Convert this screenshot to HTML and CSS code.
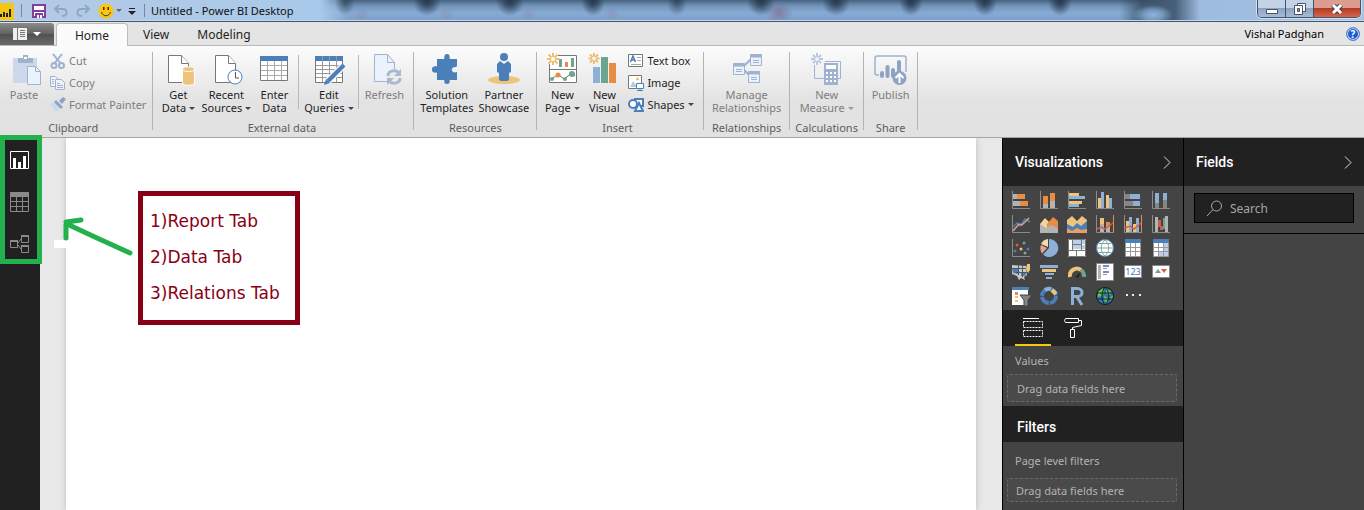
FILE: index.html
```html
<!DOCTYPE html>
<html lang="en">
<head>
<meta charset="utf-8">
<title>Untitled - Power BI Desktop</title>
<link rel="stylesheet" href="styles.css">
</head>
<body>
<header class="titlebar">
  <svg class="logo" width="14" height="20" viewBox="0 0 14 20"><path fill="#f2c811" d="M0 2h14v17H0z"/><path stroke="#222" stroke-width="2" d="M1 16v-3M4 16v-5M7 16v-4M10 16V8"/></svg>
  <span class="bar"></span>
  <button class="qa" aria-label="Save"><svg width="14" height="14" viewBox="0 0 14 14"><path fill="#fff" stroke="#7e3f9d" stroke-width="2" d="M1 1h12v12H1z"/><path fill="#7e3f9d" d="M1 6h12v2H1zM3 9h8v5H3z"/><path fill="#fff" d="M5 11h2v3H5zM8 11h2v3H8z"/></svg></button>
  <button class="qa" aria-label="Undo"><svg width="14" height="14" viewBox="0 0 14 14"><path fill="none" stroke="#8fa6c4" stroke-width="2" d="M5 1L1 5l4 4M1 5h8c5 0 5 7-1 7"/></svg></button>
  <button class="qa" aria-label="Redo"><svg width="14" height="14" viewBox="0 0 14 14"><path fill="none" stroke="#8fa6c4" stroke-width="2" d="M9 1l4 4-4 4M13 5H5c-5 0-5 7 1 7"/></svg></button>
  <button class="qa smile" aria-label="Send feedback"><svg width="16" height="16" viewBox="0 0 16 16"><circle cx="8" cy="8" r="7.500" fill="#fbc60c"/><path fill="#333" d="M5 4h1.500v3H5zM9.500 4H11v3H9.500z"/><path fill="none" stroke="#333" d="M3.500 9c1.500 5 7.500 5 9 0"/></svg><span class="caret dim"></span></button>
  <button class="qa" aria-label="Customize toolbar"><svg width="8" height="8" viewBox="0 0 8 8"><path fill="#222" d="M1 1h6v1H1zM0 4h8L4 8z"/></svg></button>
  <span class="bar last"></span>
  <h1 class="title">Untitled - Power BI Desktop</h1>
  <div class="winctl">
    <button aria-label="Minimize"><svg width="12" height="12" viewBox="0 0 12 12"><path fill="#fff" stroke="#4a5266" d="M.5 6.500h11v4H.5z"/></svg></button>
    <button aria-label="Restore"><svg width="12" height="12" viewBox="0 0 12 12"><path fill="#fff" stroke="#4a5266" d="M3.500.500h8v8h-8z"/><path fill="#fff" stroke="#4a5266" d="M.5 2.500h8v9h-8z"/><path fill="#7f94b4" stroke="#4a5266" d="M3.500 5.500h2v3h-2z"/></svg></button>
    <button class="close" aria-label="Close"><svg width="12" height="10" viewBox="0 0 12 10"><path stroke="#45404c" stroke-width="5" d="M2 1l8 8M10 1L2 9"/><path stroke="#fff" stroke-width="3" d="M2 1l8 8M10 1L2 9"/></svg></button>
  </div>
</header>

<nav class="tabs">
  <button class="file" aria-label="File"><svg width="14" height="12" viewBox="0 0 14 12"><path fill="#eee" d="M0 0h14v12H0z"/><path fill="#777" d="M4 0h1v12H4zM7 2h5v1H7zM7 4h5v1H7zM7 6h5v1H7zM7 8h5v1H7z"/></svg><span class="caret white"></span></button>
  <button class="tab active">Home</button>
  <button class="tab">View</button>
  <button class="tab">Modeling</button>
  <span class="user">Vishal Padghan</span>
  <button class="help" aria-label="Help">?</button>
</nav>

<section class="ribbon">
  <div class="group clip">
    <div class="items">
      <button class="big off w48"><svg width="32" height="32" viewBox="0 0 32 32"><path fill="#cdd9ea" d="M5 5h24v25H5z"/><path fill="#9fb2cf" d="M10 5h5V2h5v3h5v5H10z"/><path fill="#fff" d="M16 4h3v2h-3z"/><path fill="#eaf2fc" stroke="#9fb2cf" d="M19.500 13.500h8l5 5v13h-13z"/><path fill="none" stroke="#9fb2cf" d="M27.500 13.500v5h5"/></svg>Paste</button>
      <div class="list">
        <button class="small off"><svg width="16" height="16" viewBox="0 0 16 16"><g fill="none" stroke="#9fb2cf" stroke-width="2"><path d="M3 1l8 10M12 1L4 11"/><circle cx="4" cy="12.500" r="2.500"/><circle cx="11.500" cy="12.500" r="2.500"/></g></svg>Cut</button>
        <button class="small off"><svg width="16" height="16" viewBox="0 0 16 16"><g fill="#eef3fb" stroke="#9fb2cf"><path d="M.5 1.500h5l3 3v7h-8z"/><path d="M5.500 4.500h6l3 3v7h-9zM7 8.500h3M7 10.500h6M7 12.500h6M2 4.500h2M2 6.500h2M2 8.500h2"/></g></svg>Copy</button>
        <button class="small off"><svg width="16" height="16" viewBox="0 0 16 16"><path fill="#cdd9ea" d="M0 7l5-2 6 5-5 5z"/><path fill="#8da3c4" d="M4 5l2-2 7 7-2 2zM9 4l4-4 3 2-4 5z"/></svg>Format Painter</button>
      </div>
    </div>
    <div class="name">Clipboard</div>
  </div>

  <div class="group external">
    <div class="items">
      <button class="big w46"><svg width="32" height="32" viewBox="0 0 32 32"><path fill="#fff" stroke="#777" d="M6.500 2.500h13l7 8v19h-20z"/><path fill="#fff" stroke="#777" d="M19.500 2.500v8h7"/><path fill="#ecc47c" stroke="#fff" d="M20.500 16c0-3 12-3 12 0v14c0 3-12 3-12 0z"/><path fill="none" stroke="#fff" d="M21 17c1 2 10 2 11 0"/></svg>Get<br>Data<span class="caret"></span></button>
      <button class="big w50"><svg width="32" height="32" viewBox="0 0 32 32"><path fill="#fff" stroke="#777" d="M5.500 2.500h13l7 8v19h-20z"/><path fill="#fff" stroke="#777" d="M18.500 2.500v8h7"/><circle cx="25" cy="24" r="7" fill="#fff" stroke="#4a7fba"/><path fill="none" stroke="#555" d="M25.500 19v6H29"/></svg>Recent<br>Sources<span class="caret"></span></button>
      <button class="big w46"><svg width="32" height="32" viewBox="0 0 32 32"><path fill="#fff" stroke="#777" d="M2.500 3.500h27v24h-27z"/><path fill="#4a7fba" d="M2 3h28v5H2z"/><path stroke="#aaa" d="M9.500 8v19M16.500 8v19M23.500 8v19M3 12.500h26M3 17.500h26M3 22.500h26"/></svg>Enter<br>Data</button>
      <span class="rule"></span>
      <button class="big w57"><svg width="32" height="32" viewBox="0 0 32 32"><path fill="#fff" stroke="#777" d="M2.500 3.500h27v26h-27z"/><path fill="#4a7fba" d="M2 3h28v5H2z"/><path stroke="#999" d="M9.500 3v26M16.500 3v26M23.500 3v26M3 12.500h26M3 16.500h26M3 20.500h26M3 24.500h26"/><path stroke="#f4f4f4" stroke-width="7" d="M14 29L30 13"/><path stroke="#4a7fba" stroke-width="4" d="M15 28L31 12"/><path fill="#4a7fba" d="M11 32l2-6 4 4z"/></svg>Edit<br>Queries<span class="caret"></span></button>
      <span class="rule"></span>
      <button class="big off w48"><svg width="32" height="32" viewBox="0 0 32 32"><path fill="#eaf2fc" stroke="#9fb2cf" d="M6.500 1.500h13l7 8v19h-20z"/><path fill="none" stroke="#9fb2cf" d="M19.500 1.500v8h7"/><circle cx="26" cy="24" r="8" fill="#ececec"/><path fill="none" stroke="#a9b8cf" stroke-width="3" d="M20 23c0-6 9-7 11-2M32 25c0 6-9 7-11 2"/><path fill="#a9b8cf" d="M33 16v7h-7zM19 32v-7h7z"/></svg>Refresh</button>
    </div>
    <div class="name">External data</div>
  </div>

  <div class="group resources">
    <div class="items">
      <button class="big w57"><svg width="32" height="32" viewBox="0 0 32 32"><path fill="#4a7fba" d="M6 6h7c1 0-1-5 3-5s2 5 3 5h7v7c-1 2-4 0-5 3s3 4 5 3v8h-7c-1 0 1 4-3 4s-2-4-3-4H6v-7c-1-1-5 1-5-3.500S5 14 6 13z"/></svg>Solution<br>Templates</button>
      <button class="big w57"><svg width="32" height="32" viewBox="0 0 32 32"><ellipse cx="16" cy="27" rx="16" ry="4" fill="#ecc47c"/><circle cx="16" cy="4" r="4" fill="#4a7fba"/><path fill="#4a7fba" d="M12 8l4 3 4-3 3 3v8l-2 1v7l-2 1h-6l-2-1v-7l-2-1v-8z"/></svg>Partner<br>Showcase</button>
    </div>
    <div class="name">Resources</div>
  </div>

  <div class="group insert">
    <div class="items">
      <button class="big w42"><svg width="32" height="32" viewBox="0 0 32 32"><path fill="#fff" stroke="#777" d="M3.500 2.500h27v27h-27z"/><path stroke="#777" d="M4 16.500h27"/><path fill="#6ba58f" d="M13 6h3v8h-3zM25 5h3v9h-3z"/><path fill="#e78c43" d="M19 9h3v5h-3z"/><path fill="none" stroke="#666" d="M6 26l6-5 6 5 8-6 3 3"/><circle cx="6" cy="26" r="2" fill="#6ba58f"/><circle cx="12" cy="22" r="2.500" fill="#e78c43"/><circle cx="19" cy="26" r="2" fill="#6ba58f"/><circle cx="26" cy="21" r="3" fill="#6ba58f"/><circle cx="7" cy="6" r="6" fill="#fff"/><path fill="none" stroke="#ecbd72" stroke-width="2" d="M7 0v12M1 6h12M2.500 1.500l9 9M11.500 1.500l-9 9"/><circle cx="7" cy="6" r="2" fill="#fff"/></svg>New<br>Page<span class="caret"></span></button>
      <button class="big w42"><svg width="32" height="32" viewBox="0 0 32 32"><path fill="#8eafd6" d="M5 14h7v16H5z"/><path fill="#6ba58f" d="M13 4h7v26h-7z"/><path fill="#e78c43" d="M21 10h7v20h-7z"/><path stroke="#ecbd72" stroke-width="2" d="M6 0v11M.5 5.500h11M2 1.500l8 8M10 1.500l-8 8"/><circle cx="6" cy="5.500" r="2" fill="#f4f4f4"/></svg>New<br>Visual</button>
      <div class="list">
        <button class="small"><svg width="16" height="16" viewBox="0 0 16 16"><path fill="#fff" stroke="#777" d="M.5 1.500h14v12H.5z"/><path fill="none" stroke="#4a7fba" stroke-width="1.500" d="M2.500 9L5 3l2.500 6M3.500 7h3"/><path stroke="#aaa" d="M9 4.500h4M9 7.500h4M3 11.500h10"/></svg>Text box</button>
        <button class="small"><svg width="16" height="16" viewBox="0 0 16 16"><path fill="#fff" stroke="#777" d="M.5 .5h13v13H.5z"/><circle cx="9.500" cy="4" r="1.500" fill="#ecbd72"/><path fill="#b7c9df" d="M2 12l3-6 4 6z"/><path fill="#fff" stroke="#4a7fba" d="M8.500 8.500h7v5h-7zM12 14v2M9 15.500h6"/></svg>Image</button>
        <button class="small"><svg width="16" height="16" viewBox="0 0 16 16"><path fill="#fff" stroke="#4a7fba" stroke-width="2" d="M7 2h8v7H7z"/><circle cx="5" cy="7" r="4" fill="#fff" stroke="#4a7fba" stroke-width="2"/><path fill="#fff" stroke="#4a7fba" stroke-width="2" d="M11 6l4 8H7z"/></svg>Shapes<span class="caret"></span></button>
      </div>
    </div>
    <div class="name">Insert</div>
  </div>

  <div class="group">
    <div class="items">
      <button class="big off w78"><svg width="32" height="32" viewBox="0 0 32 32"><path stroke="#9fb2cf" stroke-width="2" d="M12 14l8-8M12 16l6 6"/><g fill="#eaf2fc" stroke="#9fb2cf"><path d="M2.500 10.500h11v11h-11zM19.500 1.500h11v11h-11zM17.500 18.500h11v11h-11z"/><path stroke-width="3" d="M2 12h12M19 3h12M17 20h12"/><path d="M5 16.500h6M5 18.500h6M22 7.500h6M22 9.500h6M20 24.500h6M20 26.500h6"/></g></svg>Manage<br>Relationships</button>
    </div>
    <div class="name">Relationships</div>
  </div>

  <div class="group">
    <div class="items">
      <button class="big off w66"><svg width="32" height="32" viewBox="0 0 32 32"><path fill="none" stroke="#9fb2cf" d="M3.500 12v13.500H13M14 8.500h15.500v17H27"/><path stroke="#b9c8de" stroke-width="2" d="M6 0v12M0 6h12M2 2l8 8M10 2l-8 8"/><circle cx="6" cy="6" r="2" fill="#f2f2f2"/><path fill="#9fb2cf" d="M13 10h14v22H13z"/><path fill="#fff" d="M15 12h10v4H15zM15 19h2v2h-2zM19 19h2v2h-2zM23 19h2v2h-2zM15 23h2v2h-2zM19 23h2v2h-2zM23 23h2v2h-2zM15 27h2v2h-2zM19 27h2v2h-2zM23 27h2v2h-2z"/></svg>New<br>Measure<span class="caret"></span></button>
    </div>
    <div class="name">Calculations</div>
  </div>

  <div class="group">
    <div class="items">
      <button class="big off w46"><svg width="32" height="32" viewBox="0 0 32 32"><path fill="none" stroke="#9fb2cf" stroke-width="1.500" d="M4 22H2c-1 0-2-1-2-2V5c0-1 1-2 2-2h27c1 0 2 1 2 2v14"/><path stroke="#8da3c4" stroke-width="4" stroke-linecap="round" d="M7 20v3M12.500 14v9M18 17v6M24 9v12"/><circle cx="24.500" cy="25" r="7" fill="#8da3c4"/><path fill="none" stroke="#fff" stroke-width="2" d="M24.500 30v-9M20.500 25l4-4 4 4"/></svg>Publish</button>
    </div>
    <div class="name">Share</div>
  </div>
</section>

<main class="work">
  <aside class="views">
    <button aria-label="Report"><svg width="20" height="20" viewBox="0 0 20 20"><path fill="none" stroke="#fff" d="M.5 1.500h18v17H.5z"/><path fill="#fff" d="M3 8h3v10H3zM8 12h3v6H8zM13 6h3v12h-3z"/></svg></button>
    <button aria-label="Data"><svg width="20" height="20" viewBox="0 0 20 20"><path fill="none" stroke="#8a8a8a" d="M.5.500h18v19H.5zM6.500 5v14M12.500 5v14M1 9.500h18M1 14.500h18"/><path fill="#8a8a8a" d="M0 0h19v5H0z"/></svg></button>
    <button aria-label="Relationships"><svg width="20" height="20" viewBox="0 0 20 20"><path fill="none" stroke="#8a8a8a" d="M.5 6.500h7v7h-7zM11.500 1.500h7v7h-7zM11.500 11.500h7v7h-7zM8 9l3-4M8 11l3 4"/><path fill="#8a8a8a" d="M0 6h8v2H0zM11 1h8v2h-8zM11 11h8v2h-8z"/></svg></button>
    <div class="mark"></div>
  </aside>
  <div class="stage">
    <div class="page"></div>
    <div class="patch"></div>
    <svg class="arrow" width="72" height="40" viewBox="0 0 72 40"><path fill="none" stroke="#22b14c" stroke-width="5" stroke-linecap="round" stroke-linejoin="round" d="M68 36L35 21 5 7M19 3L4 5M4 8v13"/></svg>
    <div class="note"><p>1)Report Tab</p><p>2)Data Tab</p><p>3)Relations Tab</p></div>
  </div>

  <section class="panel">
    <h2 class="head">Visualizations<button aria-label="Collapse visualizations"><svg width="8" height="13" viewBox="0 0 8 13"><path fill="none" stroke="#ddd" d="M1 .5l6 6-6 6"/></svg></button></h2>
    <div class="gallery">
      <button aria-label="Stacked bar chart"><svg viewBox="0 0 18 18"><path fill="#b3b3b3" d="M1 3h4v5H1zM1 10h7v5H1z"/><path fill="#e78c43" d="M5 3h8v5H5zM8 10h8v5H8z"/><path class="ax" d="M.5 0v17.500H18"/></svg></button>
      <button aria-label="Stacked column chart"><svg viewBox="0 0 18 18"><path fill="#b3b3b3" d="M3 13h5v4H3zM10 10h5v7h-5z"/><path fill="#e78c43" d="M3 5h5v8H3zM10 2h5v8h-5z"/><path class="ax" d="M.5 0v17.500H18"/></svg></button>
      <button aria-label="Clustered bar chart"><svg viewBox="0 0 18 18"><path fill="#ecc47c" d="M1 2h10v3H1zM1 10h13v3H1z"/><path fill="#8eafd6" d="M1 5h16v3H1zM1 13h10v3H1z"/><path class="ax" d="M.5 0v17.500H18"/></svg></button>
      <button aria-label="Clustered column chart"><svg viewBox="0 0 18 18"><path fill="#ecc47c" d="M2 7h3v10H2zM10 4h3v13h-3z"/><path fill="#8eafd6" d="M5 1h3v16H5zM13 7h3v10h-3z"/><path class="ax" d="M.5 0v17.500H18"/></svg></button>
      <button aria-label="100% stacked bar chart"><svg viewBox="0 0 18 18"><path fill="#858585" d="M1 3h5v5H1zM1 10h8v5H1z"/><path fill="#8eafd6" d="M6 3h10v5H6zM9 10h7v5H9z"/><path class="ax" d="M.5 0v17.500H18"/></svg></button>
      <button aria-label="100% stacked column chart"><svg viewBox="0 0 18 18"><path fill="#858585" d="M3 12h4v5H3zM11 9h4v8h-4z"/><path fill="#8eafd6" d="M3 2h4v10H3zM11 2h4v7h-4z"/><path class="ax" d="M.5 0v17.500H18"/></svg></button>

      <button aria-label="Line chart"><svg viewBox="0 0 18 18"><path fill="none" stroke="#4a7fba" stroke-width="1.500" d="M1 12l4-4 3 3 5-7 5 3"/><path fill="none" stroke="#dba08b" stroke-width="1.500" d="M1 16l6-7 3 1 7-7"/><path class="ax" d="M.5 0v17.500H18"/></svg></button>
      <button aria-label="Area chart"><svg viewBox="0 0 18 18"><path fill="#f0d49c" d="M0 9l5-6 5 5v6H0z"/><path fill="#e78c43" d="M7 9l6-7 5 4v7H7z"/><path fill="#b3b3b3" d="M0 9l6 4 5-3 7 3v5H0z"/></svg></button>
      <button aria-label="Stacked area chart"><svg viewBox="0 0 18 18"><path fill="#ecc47c" d="M-1 5l5-4 5 5 5-5 5 4v9H-1z"/><path fill="#eb9d63" d="M-1 12h20v6H-1z"/><path fill="#4a7fba" d="M-1 9l6 3 4-4 4 3 6-5v8l-6 1-4-2-5 3-5-3z"/></svg></button>
      <button aria-label="Line and stacked column chart"><svg viewBox="0 0 18 18"><path fill="#b3b3b3" d="M4 9h4v8H4zM10 7h4v10h-4z"/><path fill="#ecc47c" d="M4 3h4v6H4z"/><path fill="#e78c43" d="M10 7h4v4h-4zM17 0h1v18h-1z"/><path fill="none" stroke="#d35c48" stroke-width="1.500" d="M1 14l4-2 4 2 4-3 4-3"/><path class="ax" d="M.5 0v17.500H18"/></svg></button>
      <button aria-label="Line and clustered column chart"><svg viewBox="0 0 18 18"><path fill="#ecc47c" d="M2 6h3v11H2zM9 9h3v8H9z"/><path fill="#8eafd6" d="M5 2h3v15H5zM12 3h3v14h-3z"/><path fill="#e78c43" d="M17 0h1v18h-1z"/><path fill="none" stroke="#d35c48" stroke-width="1.500" d="M1 13l5-2 4 3 7-6"/><path class="ax" d="M.5 0v17.500H18"/></svg></button>
      <button aria-label="Waterfall chart"><svg viewBox="0 0 18 18"><path fill="#b3b3b3" d="M3 2h3v15H3zM13 1h3v16h-3z"/><path fill="#d35c48" d="M6 5h3v7H6zM8 11h3v4H8z"/><path fill="#6ba58f" d="M11 3h2v11h-2z"/><path class="ax" d="M.5 0v17.500H18"/></svg></button>

      <button aria-label="Scatter chart"><svg viewBox="0 0 18 18"><circle cx="5" cy="6" r="1.500" fill="#d35c48"/><circle cx="12" cy="4" r="1.500" fill="#6ba58f"/><circle cx="3" cy="12" r="1.500" fill="#4a7fba"/><circle cx="9" cy="10" r="1.500" fill="#ecc47c"/><circle cx="13" cy="14" r="1.500" fill="#999"/><circle cx="16" cy="10" r="1.500" fill="#4a7fba"/><path class="ax" d="M.5 0v17.500H18"/></svg></button>
      <button aria-label="Pie chart"><svg viewBox="0 0 18 18"><path fill="#8eafd6" d="M9 9V0a9 9 0 1 1-6 15.500z"/><path fill="#f3dba8" d="M8 8V0A9 9 0 0 0 1 5z"/><path fill="#e6a390" d="M7 9L1 6a9 9 0 0 0 1 8.500z"/></svg></button>
      <button aria-label="Treemap"><svg viewBox="0 0 18 18"><path fill="#fff" d="M0 0h18v18H0z"/><path fill="#bdd0e8" d="M5 1h8v9H5zM14 1h3v4h-3zM14 6h3v4h-3z"/><path fill="none" stroke="#777" d="M4.500 0v11M13.500 0v11M0 11.500h18M8.500 12v6M.5.500h17v17H.5zM5 5.500h9"/></svg></button>
      <button aria-label="Map"><svg viewBox="0 0 18 18"><circle cx="9" cy="9" r="8.500" fill="#fff" stroke="#4a7fba"/><path fill="none" stroke="#7fa99c" d="M9 1C4 5 4 13 9 17C14 13 14 5 9 1zM1 9h16M3 4.500h12M3 13.500h12"/></svg></button>
      <button aria-label="Table"><svg viewBox="0 0 18 18"><path fill="#fff" stroke="#999" d="M1.500.500h15v17h-15z"/><path stroke="#999" d="M6.500 4v14M11.500 4v14M1 8.500h16M1 12.500h16"/><path fill="#4a7fba" d="M1 0h16v4H1z"/></svg></button>
      <button aria-label="Matrix"><svg viewBox="0 0 18 18"><path fill="#fff" stroke="#999" d="M1.500.500h15v17h-15z"/><path fill="#bdd0e8" d="M12 4h4v13h-4zM7 13h5v4H7z"/><path stroke="#999" d="M6.500 4v14M11.500 4v14M1 8.500h16M1 12.500h16"/><path fill="#4a7fba" d="M1 0h16v4H1z"/></svg></button>

      <button aria-label="Filled map"><svg viewBox="0 0 18 18"><path fill="#c4c9cc" d="M0 2l14 1 1 9-3 2 1 3-4-2-2 2-2-4-5-2z"/><path fill="#4a7fba" d="M0 5h6v6l-5-1zM9 9h6l-2 4H9z"/><path fill="#ecc47c" d="M15 1h3v6l-2 3-2-4z"/><path fill="none" stroke="#555" d="M6.500 2v10M10.500 2v12M0 5.500h14M4 9.500h11"/></svg></button>
      <button aria-label="Funnel"><svg viewBox="0 0 18 18"><path fill="#8eafd6" d="M0 2h18v3H0zM5 10h9v2H5zM6 14h6v2H6z"/><path fill="#ecc47c" d="M2 6h14v3H2z"/></svg></button>
      <button aria-label="Gauge"><svg viewBox="0 0 18 18"><path fill="none" stroke="#ecc47c" stroke-width="4" d="M2 14a7 7 0 0 1 11-7"/><path fill="none" stroke="#6ba58f" stroke-width="4" d="M13 7a8 8 0 0 1 3 7"/><path fill="#222" d="M7 14l6-5-3 6z"/></svg></button>
      <button aria-label="Multi-row card"><svg viewBox="0 0 18 18"><path fill="#fff" stroke="#888" d="M.5.500h17v17H.5z"/><path fill="#b3b3b3" d="M2 2h3v14H2z"/><path stroke="#6b91c2" stroke-width="2" d="M7 3h6M7 9h6"/><path stroke="#999" d="M7 5.500h4M7 11.500h4"/></svg></button>
      <button aria-label="Card"><svg viewBox="0 0 18 18"><path fill="#fff" stroke="#888" d="M.5 2.500h17v12H.5z"/><text x="9" y="12" text-anchor="middle" class="num">123</text></svg></button>
      <button aria-label="KPI"><svg viewBox="0 0 18 18"><path fill="#fff" stroke="#888" d="M.5 2.500h17v12H.5z"/><path fill="#6ba58f" d="M3 10l3-4 3 4z"/><path fill="#d35c48" d="M9 6h6l-3 4z"/></svg></button>

      <button aria-label="Slicer"><svg viewBox="0 0 18 18"><path fill="#fff" d="M0 0h16v18H0z"/><path fill="#4a7fba" d="M0 0h17v3H0z"/><path fill="#e78c43" d="M3 5h3v3H3z"/><path fill="#ecc47c" d="M3 9h3v2H3zM3 13h3v2H3z"/><path fill="#858585" stroke="#444" d="M8 8h12l-4 5v6h-4v-6z"/></svg></button>
      <button aria-label="Donut chart"><svg viewBox="0 0 18 18"><circle cx="9" cy="9" r="7" fill="none" stroke="#4a7fba" stroke-width="4" stroke-dasharray="10 1"/><path fill="none" stroke="#ecc47c" stroke-width="4" d="M12 3l4 4"/><path fill="none" stroke="#8eafd6" stroke-width="4" d="M5 3a7 7 0 0 1 6-1"/></svg></button>
      <button aria-label="R script visual"><svg viewBox="0 0 18 18"><path fill="none" stroke="#8eafd6" stroke-width="3" d="M4.500 18V1.500h5c6 0 6 8 0 8h-5M9 10l5 8"/></svg></button>
      <button aria-label="ArcGIS map"><svg viewBox="0 0 18 18"><circle cx="9" cy="9" r="9" fill="#121c18"/><circle cx="9" cy="9" r="8" fill="#2f78ad"/><path fill="#6cc04a" d="M2 5l5-4 1 4-3 4-3 1zM10 2l5 2-1 4-4-2zM8 9l4 2-1 5-3-3zM14 10l3-1-2 5z"/><path fill="none" stroke="#122" d="M9 0c-4 5-4 13 0 18M9 0c5 5 5 13 0 18M1 6h16M1 12h16"/></svg></button>
      <button aria-label="More visuals"><svg viewBox="0 0 18 18"><path fill="#eee" d="M2 7h2v2H2zM8 7h2v2H8zM15 7h2v2h-2z"/></svg></button>
    </div>
    <div class="modes">
      <button class="on" aria-label="Fields"><svg width="20" height="20" viewBox="0 0 20 20"><path stroke="#fff" d="M0 .5h16"/><path fill="none" stroke="#fff" stroke-dasharray="2 1" d="M.5 3.500h19v6H.5zM.5 12.500h19v6H.5z"/></svg></button>
      <button aria-label="Format"><svg width="20" height="20" viewBox="0 0 20 20"><path fill="none" stroke="#fff" d="M2.500.500h13v4h-13l-1-2zM16 2.500h2.500v5l-9 2v2M7.500 11.500h4v8h-4z"/></svg></button>
    </div>
    <div class="well"><h3>Values</h3><div class="drop">Drag data fields here</div></div>
    <h2 class="head filters">Filters</h2>
    <div class="well low"><h3>Page level filters</h3><div class="drop">Drag data fields here</div></div>
  </section>

  <section class="panel">
    <h2 class="head">Fields<button aria-label="Collapse fields"><svg width="8" height="13" viewBox="0 0 8 13"><path fill="none" stroke="#ddd" d="M1 .5l6 6-6 6"/></svg></button></h2>
    <div class="find">
      <label class="search"><svg width="17" height="17" viewBox="0 0 17 17"><circle cx="10.500" cy="6" r="5" fill="none" stroke="#aaa"/><path stroke="#aaa" d="M7 9.500L1 16"/></svg><input type="text" placeholder="Search" aria-label="Search"></label>
    </div>
  </section>
</main>
</body>
</html>
```
FILE: styles.css
```css
* { box-sizing: border-box; }
html, body { height: 100%; }
body {
  margin: 0;
  display: flex;
  flex-direction: column;
  overflow: hidden;
  background: #e8e8e8;
  color: #1e1e1e;
  font: 11px/13px "Noto Sans", "Open Sans", sans-serif;
}
button {
  margin: 0;
  padding: 0;
  border: 0;
  background: none;
  color: inherit;
  font: inherit;
}
svg { display: block; flex: none; }
h1, h2, h3, p { margin: 0; font-weight: normal; }

.caret {
  display: inline-block;
  margin-left: 3px;
  border: 3px solid transparent;
  border-top-color: #444;
  border-bottom: 0;
  vertical-align: 2px;
}
.caret.dim { border-top-color: #667; margin-left: 2px; }
.caret.white { border-width: 4px 4px 0; border-top-color: #fff; margin: 0; }
.off .caret { border-top-color: #999; }

/* Title bar */
.titlebar {
  --blot: #1c2c3ecc, #1c2c3e99 35%, #1c2c3e00;
  --rose: #9c6f8e44, #9c6f8e00;
  display: flex;
  align-items: center;
  height: 22px;
  flex: none;
  border-bottom: 1px solid #435672;
  box-shadow: inset 0 -1px #c4d7ec;
  background:
    radial-gradient(10px 14px at 345px 2px, #1c2c3e99, #1c2c3e00),
    radial-gradient(14px 14px at 427px 2px, var(--blot)),
    radial-gradient(14px 14px at 510px 2px, var(--blot)),
    radial-gradient(12px 14px at 593px 2px, var(--blot)),
    radial-gradient(10px 14px at 677px 2px, #1c2c3e99, #1c2c3e00),
    radial-gradient(14px 14px at 761px 2px, var(--blot)),
    radial-gradient(14px 14px at 836px 2px, var(--blot)),
    radial-gradient(12px 14px at 911px 2px, var(--blot)),
    radial-gradient(12px 14px at 985px 2px, var(--blot)),
    radial-gradient(12px 14px at 1060px 2px, var(--blot)),
    radial-gradient(8px 8px at 362px 15px, var(--rose)),
    radial-gradient(8px 8px at 446px 15px, var(--rose)),
    radial-gradient(8px 8px at 528px 15px, var(--rose)),
    radial-gradient(8px 8px at 612px 15px, var(--rose)),
    radial-gradient(14px 12px at 779px 13px, #805f8299, #805f8200),
    radial-gradient(20px 10px at 1153px 15px, #8db5e0, #8db5e0aa 50%, #8db5e000),
    linear-gradient(90deg, #b4cae4 0, #a9c9ea 320px, #a9c9ea00 350px, #34485d00 1120px, #34485dcc 1142px, #465e78 1175px, #9dbce0 1200px, #a8c1dd),
    linear-gradient(#46627f, #7395bb 6px, #86abd4 13px, #7c9fc8);
}
.bar { width: 1px; height: 13px; margin: 0 10px 0 7px; background: #75879e; }
.bar.last { margin: 0 6px 0 0; }
.qa { display: flex; align-items: center; margin-right: 8px; }
.qa.smile { margin-right: 6px; }
.title { font-size: 11px; color: #111; }
.winctl {
  display: flex;
  align-self: flex-start;
  height: 18px;
  margin: 0 3px 0 auto;
  border: 1px solid #44546b;
  border-top: 0;
  border-radius: 0 0 5px 5px;
  overflow: hidden;
  box-shadow: 0 0 0 1px #cfe0f2;
}
.winctl button {
  width: 28px;
  display: grid;
  place-items: center;
  border-right: 1px solid #44546b;
  background: linear-gradient(#c3d2e6 50%, #8ca2c2 50%, #a9bcd6);
}
.winctl .close { width: 46px; border: 0; background: linear-gradient(#dc9d91 50%, #b73a25 50%, #d4664b); }

/* Tab strip */
.tabs {
  display: flex;
  align-items: stretch;
  flex: none;
  height: 24px;
  border-bottom: 1px solid #b9b9b9;
  background: #e4e4e4;
  font-size: 12px;
}
.file {
  width: 54px;
  display: flex;
  align-items: center;
  justify-content: center;
  gap: 6px;
  margin: 1px 2px 0 0;
  border-radius: 0 3px 0 0;
  background: linear-gradient(#8b8b8b, #626262 50%, #4f4f4f 50%, #6b6b6b);
}
.tab { padding: 2px 14px 0; }
.tab.active {
  width: 72px;
  height: 24px;
  margin: 1px 1px 0 0;
  padding: 0;
  border: 1px solid #bdbdbd;
  border-bottom: 0;
  border-radius: 4px 4px 0 0;
  background: #fbfbfb;
}
.user { margin-left: auto; align-self: center; font-size: 11px; color: #000; }
.help {
  align-self: center;
  width: 14px;
  height: 14px;
  margin: 0 4px 0 22px;
  border: 1px solid #5c86cc;
  border-radius: 50%;
  box-shadow: inset 0 0 0 1px #cfe1fa;
  background: #1d5bd0;
  color: #fff;
  font: bold 10px/10px "Noto Sans", sans-serif;
}

/* Ribbon */
.ribbon {
  display: flex;
  flex: none;
  height: 92px;
  border-bottom: 1px solid #a6a6a6;
  background: linear-gradient(#fcfcfc, #e3e3e3 60%, #e1e1e1);
}
.group {
  display: flex;
  flex-direction: column;
  justify-content: space-between;
  flex: none;
  padding: 4px 4px 2px;
  background: linear-gradient(#b3b3b3, #b3b3b3) right 6px / 1px 78px no-repeat;
}
.group.clip { padding-left: 0; padding-right: 7px; }
.group.external { padding-left: 2px; padding-right: 6px; }
.group.resources { padding-right: 5px; }
.group.insert { padding-right: 10px; }
.items { display: flex; }
.name { text-align: center; color: #5c5c5c; line-height: 14px; }
.big { padding-top: 3px; white-space: nowrap; align-self: flex-start; }
.big svg { margin: 0 auto 3px; overflow: visible; }
.off { color: #7d7d7d; }
.w42 { width: 42px; }
.w46 { width: 46px; }
.w48 { width: 48px; }
.w50 { width: 50px; }
.w57 { width: 57px; }
.w66 { width: 66px; }
.w78 { width: 78px; }
.rule { width: 1px; height: 54px; margin: 5px 1px 0; background: #b9b9b9; }
.list { display: flex; flex-direction: column; margin-left: 2px; }
.insert .list { margin-left: 3px; }
.small { display: flex; align-items: center; height: 22px; gap: 3px; padding-bottom: 1px; white-space: nowrap; }
.small .caret { margin-left: 0; }

/* Work area */
.work { display: flex; flex: 1; min-height: 0; }
.views { position: relative; flex: none; width: 40px; padding-top: 1px; background: #212121; }
.views button { display: grid; place-items: center; width: 100%; height: 42px; }
.mark {
  position: absolute;
  z-index: 1;
  left: 0;
  top: -3px;
  width: 42px;
  height: 129px;
  border: 5px solid #22b14c;
}
.stage { position: relative; flex: 1; display: flex; padding: 0 26px; }
.page { flex: 1; background: #fff; box-shadow: 0 0 6px #bbb; clip-path: inset(0 -6px); }
.patch { position: absolute; left: 14px; top: 102px; width: 12px; height: 8px; background: #fff; }
.arrow { position: absolute; left: 22px; top: 79px; }
.note {
  position: absolute;
  left: 98px;
  top: 53px;
  padding: 7px 15px 9px 7px;
  border: 5px solid #880015;
  background: #fff;
  color: #880015;
  font: 17px/36px "DejaVu Sans", sans-serif;
}

/* Side panels */
.panel {
  flex: none;
  width: 181px;
  border-left: 1px solid #000;
  background: #444;
  color: #b3b3b3;
}
.head {
  display: flex;
  align-items: center;
  justify-content: space-between;
  height: 48px;
  padding: 0 12px;
  background: #212121;
  color: #fff;
  font: 500 14px/18px Roboto, sans-serif;
}
.filters { height: 36px; padding: 6px 14px 0; }
.gallery {
  display: grid;
  grid-template-columns: repeat(6, 28px);
  grid-auto-rows: 24px;
  padding: 2px 4px;
}
.gallery button { display: grid; place-items: center; }
.gallery svg { width: 18px; height: 18px; overflow: visible; }
.ax { fill: none; stroke: #8c8c8c; }
.num { font: 9px "Noto Sans", sans-serif; fill: #3f72b0; }
.modes { display: flex; gap: 4px; height: 36px; padding-left: 12px; background: #212121; }
.modes button { width: 36px; display: grid; place-items: center; padding-top: 2px; border-bottom: 2px solid transparent; }
.modes .on { border-color: #f2c811; }
.well { padding: 7px 6px 4px 4px; }
.well h3 { padding-left: 8px; font-size: 11px; line-height: 16px; }
.drop {
  height: 28px;
  margin-top: 5px;
  padding-left: 9px;
  border: 1px dashed #6a6a6a;
  border-radius: 3px;
  background: #4a4a4a;
  line-height: 27px;
}
.low { padding-top: 11px; }
.low .drop { height: 24px; margin-top: 9px; padding-left: 8px; line-height: 23px; }
.find { padding: 7px 10px 10px; border-bottom: 1px solid #000; }
.search {
  display: flex;
  align-items: center;
  gap: 7px;
  height: 30px;
  padding-left: 11px;
  border: 1px solid #000;
  background: #212121;
}
.search input {
  min-width: 0;
  flex: 1;
  border: 0;
  padding: 2px 0 0;
  outline: 0;
  background: none;
  color: #b3b3b3;
  font: 12px/16px "Noto Sans", sans-serif;
}
.search input::placeholder { color: #a6a6a6; opacity: 1; }
```
